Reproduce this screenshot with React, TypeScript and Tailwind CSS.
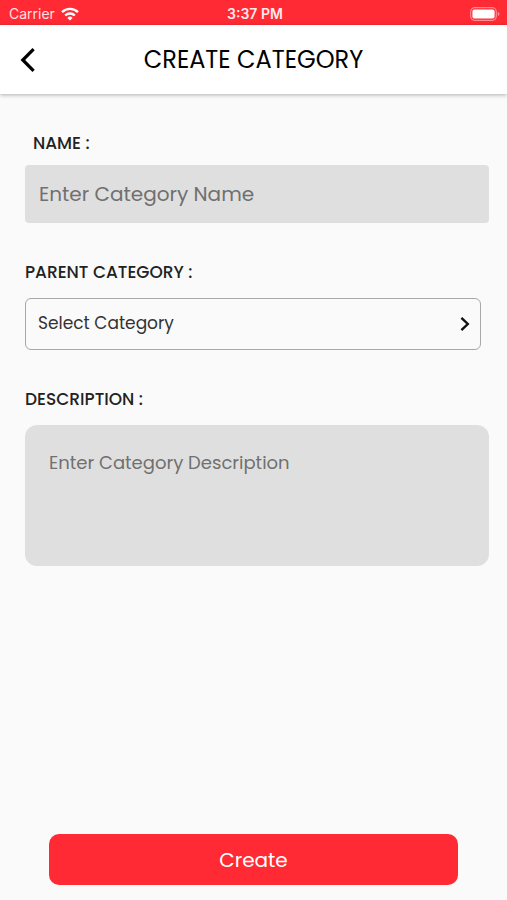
import { useState } from "react";
import type { FormEvent } from "react";

interface CategoryForm {
  name: string;
  parent: string;
  description: string;
}

function StatusBar() {
  return (
    <div className="grid h-[25px] grid-cols-3 items-center bg-[#ff2a33] pl-[9px] pr-[6px] pt-[2px] font-['Inter',sans-serif] text-sm text-white">
      <div className="flex items-center gap-[6px]">
        <span className="opacity-85">Carrier</span>
        <svg viewBox="0 0 18 14" className="h-[14px] w-[18px]" fill="none" stroke="currentColor" strokeWidth="2.4">
          <path d="M1 5.2a11.4 11.4 0 0 1 16 0" />
          <path d="M4.2 8.5a6.8 6.8 0 0 1 9.6 0" />
          <path d="M9 13.6 6.4 10.9a3.7 3.7 0 0 1 5.2 0z" fill="currentColor" stroke="none" />
        </svg>
      </div>
      <span className="text-center font-semibold opacity-90">3:37 PM</span>
      <svg viewBox="0 0 31 14" className="h-[14px] w-[31px] justify-self-end">
        <rect x="0.7" y="0.7" width="25.6" height="12.6" rx="4" fill="none" stroke="#ff8a8f" strokeWidth="1.2" />
        <rect x="2.4" y="2.4" width="22.2" height="9.2" rx="2" fill="#fff" />
        <path d="M27.8 4.8c2.2.7 2.2 3.7 0 4.4z" fill="#ff8a8f" />
      </svg>
    </div>
  );
}

function Header() {
  return (
    <header className="z-10 grid h-[69px] grid-cols-[54px_1fr_54px] items-center bg-white shadow-[0_1px_4px_rgba(0,0,0,0.3)]">
      <button type="button" aria-label="Go back" className="flex h-full items-center pl-[20px]">
        <svg viewBox="0 0 16 26" className="h-[26px] w-4" fill="none" stroke="#000" strokeWidth="3.2">
          <path d="M13.6 2.2 2.8 13l10.8 10.8" />
        </svg>
      </button>
      <h1 className="text-center text-2xl text-black">CREATE CATEGORY</h1>
    </header>
  );
}

export default function App() {
  const [form, setForm] = useState<CategoryForm>({ name: "", parent: "", description: "" });

  const handleSubmit = (e: FormEvent) => {
    e.preventDefault();
  };

  return (
    <div className="flex min-h-screen flex-col bg-[#fafafa] font-['Poppins','Inter',sans-serif] text-[#222]">
      <StatusBar />
      <Header />
      <form onSubmit={handleSubmit} className="flex flex-1 flex-col">
        <div className="flex flex-col gap-[37px] pb-8 pl-[25px] pr-[18px] pt-[37px]">
          <div className="flex flex-col gap-[10px]">
            <label htmlFor="name" className="ml-2 text-[17px] leading-6 font-medium">
              NAME :
            </label>
            <input
              id="name"
              type="text"
              placeholder="Enter Category Name"
              value={form.name}
              onChange={(e) => setForm({ ...form, name: e.target.value })}
              className="h-[58px] w-full rounded bg-[#dfdfdf] px-[14px] text-xl outline-none placeholder:text-[#707070]"
            />
          </div>

          <div className="flex flex-col gap-[14px]">
            <label htmlFor="parent" className="text-[17px] leading-6 font-medium">
              PARENT CATEGORY :
            </label>
            <div className="relative mr-2">
              <select
                id="parent"
                value={form.parent}
                onChange={(e) => setForm({ ...form, parent: e.target.value })}
                className="h-[52px] w-full appearance-none rounded-md border border-[#a8a8a8] bg-transparent px-3 text-[17px] text-[#333] outline-none"
              >
                <option value="">Select Category</option>
              </select>
              <svg
                viewBox="0 0 10 16"
                className="pointer-events-none absolute inset-y-0 right-[11px] my-auto h-4 w-[10px]"
                fill="none"
                stroke="#111"
                strokeWidth="2.4"
              >
                <path d="M1.4 1.8 7.8 8l-6.4 6.2" />
              </svg>
            </div>
          </div>

          <div className="flex flex-col gap-[14px]">
            <label htmlFor="description" className="text-[17px] leading-6 font-medium">
              DESCRIPTION :
            </label>
            <textarea
              id="description"
              placeholder="Enter Category Description"
              value={form.description}
              onChange={(e) => setForm({ ...form, description: e.target.value })}
              className="h-[141px] w-full resize-none rounded-xl bg-[#dfdfdf] px-6 py-6 text-lg outline-none placeholder:text-[#707070]"
            />
          </div>
        </div>

        <button
          type="submit"
          className="mx-[49px] mt-auto mb-[15px] h-[51px] rounded-[10px] bg-[#ff2a33] text-xl text-white"
        >
          Create
        </button>
      </form>
    </div>
  );
}
